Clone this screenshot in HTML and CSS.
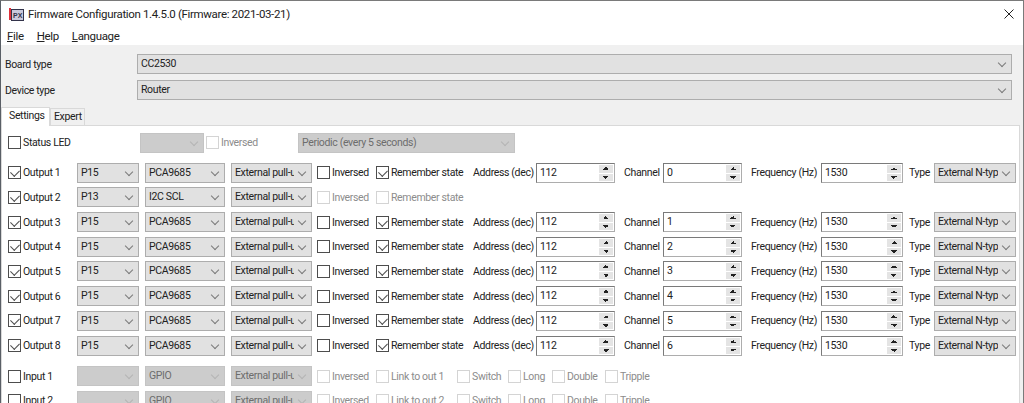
FILE: index.html
```html
<!DOCTYPE html>
<html lang="en">
<head>
  <meta charset="UTF-8">
  <title>Firmware Configuration</title>
  <link rel="stylesheet" href="styles.css">
</head>
<body>
  <div class="window">
    <div class="titlebar">
      <svg class="app-icon" width="15" height="13" viewBox="0 0 15 13">
        <rect x="2.5" y="1.5" width="12" height="11" fill="#c9c9dc" stroke="#33334a"/>
        <rect x="0" y="0" width="2" height="12" fill="#e0303a"/>
        <text x="4" y="10" class="app-icon-text">PX</text>
      </svg>
      <span class="title">Firmware Configuration 1.4.5.0 (Firmware: 2021-03-21)</span>
      <svg class="close" width="10" height="10" viewBox="0 0 10 10">
        <path d="M0.5 0.5L9.5 9.5M9.5 0.5L0.5 9.5" stroke="#222" fill="none"/>
      </svg>
    </div>
    <div class="menubar">
      <span><u>F</u>ile</span>
      <span><u>H</u>elp</span>
      <span><u>L</u>anguage</span>
    </div>

    <div class="top-fields">
      <div class="top-field">
        <label>Board type</label>
        <div class="select">CC2530</div>
      </div>
      <div class="top-field">
        <label>Device type</label>
        <div class="select">Router</div>
      </div>
    </div>

    <div class="tabs">
      <div class="tab active">Settings</div>
      <div class="tab">Expert</div>
    </div>

    <div class="panel">
      <div class="status-row">
        <div class="check-item status-label"><span class="check"></span>Status LED</div>
        <div class="select off status-pin"></div>
        <div class="check-item off status-inv"><span class="check"></span>Inversed</div>
        <div class="select off status-mode">Periodic (every 5 seconds)</div>
      </div>

      <div class="outputs">
        <div class="row">
          <div class="check-item"><span class="check on"></span>Output 1</div>
          <div class="select pin">P15</div>
          <div class="select mode">PCA9685</div>
          <div class="select pull">External pull-up</div>
          <div class="check-item"><span class="check"></span>Inversed</div>
          <div class="check-item"><span class="check on"></span>Remember state</div>
          <div class="field-label">Address (dec)</div>
          <div class="spin addr">112<span class="arrows"></span></div>
          <div class="field-label">Channel</div>
          <div class="spin addr">0<span class="arrows"></span></div>
          <div class="field-label">Frequency (Hz)</div>
          <div class="spin freq">1530<span class="arrows"></span></div>
          <div class="field-label">Type</div>
          <div class="select type">External N-type</div>
        </div>
        <div class="row">
          <div class="check-item"><span class="check on"></span>Output 2</div>
          <div class="select pin">P13</div>
          <div class="select mode">I2C SCL</div>
          <div class="select pull">External pull-up</div>
          <div class="check-item off"><span class="check"></span>Inversed</div>
          <div class="check-item off"><span class="check"></span>Remember state</div>
        </div>
        <div class="row">
          <div class="check-item"><span class="check on"></span>Output 3</div>
          <div class="select pin">P15</div>
          <div class="select mode">PCA9685</div>
          <div class="select pull">External pull-up</div>
          <div class="check-item"><span class="check"></span>Inversed</div>
          <div class="check-item"><span class="check on"></span>Remember state</div>
          <div class="field-label">Address (dec)</div>
          <div class="spin addr">112<span class="arrows"></span></div>
          <div class="field-label">Channel</div>
          <div class="spin addr">1<span class="arrows"></span></div>
          <div class="field-label">Frequency (Hz)</div>
          <div class="spin freq">1530<span class="arrows"></span></div>
          <div class="field-label">Type</div>
          <div class="select type">External N-type</div>
        </div>
        <div class="row">
          <div class="check-item"><span class="check on"></span>Output 4</div>
          <div class="select pin">P15</div>
          <div class="select mode">PCA9685</div>
          <div class="select pull">External pull-up</div>
          <div class="check-item"><span class="check"></span>Inversed</div>
          <div class="check-item"><span class="check on"></span>Remember state</div>
          <div class="field-label">Address (dec)</div>
          <div class="spin addr">112<span class="arrows"></span></div>
          <div class="field-label">Channel</div>
          <div class="spin addr">2<span class="arrows"></span></div>
          <div class="field-label">Frequency (Hz)</div>
          <div class="spin freq">1530<span class="arrows"></span></div>
          <div class="field-label">Type</div>
          <div class="select type">External N-type</div>
        </div>
        <div class="row">
          <div class="check-item"><span class="check on"></span>Output 5</div>
          <div class="select pin">P15</div>
          <div class="select mode">PCA9685</div>
          <div class="select pull">External pull-up</div>
          <div class="check-item"><span class="check"></span>Inversed</div>
          <div class="check-item"><span class="check on"></span>Remember state</div>
          <div class="field-label">Address (dec)</div>
          <div class="spin addr">112<span class="arrows"></span></div>
          <div class="field-label">Channel</div>
          <div class="spin addr">3<span class="arrows"></span></div>
          <div class="field-label">Frequency (Hz)</div>
          <div class="spin freq">1530<span class="arrows"></span></div>
          <div class="field-label">Type</div>
          <div class="select type">External N-type</div>
        </div>
        <div class="row">
          <div class="check-item"><span class="check on"></span>Output 6</div>
          <div class="select pin">P15</div>
          <div class="select mode">PCA9685</div>
          <div class="select pull">External pull-up</div>
          <div class="check-item"><span class="check"></span>Inversed</div>
          <div class="check-item"><span class="check on"></span>Remember state</div>
          <div class="field-label">Address (dec)</div>
          <div class="spin addr">112<span class="arrows"></span></div>
          <div class="field-label">Channel</div>
          <div class="spin addr">4<span class="arrows"></span></div>
          <div class="field-label">Frequency (Hz)</div>
          <div class="spin freq">1530<span class="arrows"></span></div>
          <div class="field-label">Type</div>
          <div class="select type">External N-type</div>
        </div>
        <div class="row">
          <div class="check-item"><span class="check on"></span>Output 7</div>
          <div class="select pin">P15</div>
          <div class="select mode">PCA9685</div>
          <div class="select pull">External pull-up</div>
          <div class="check-item"><span class="check"></span>Inversed</div>
          <div class="check-item"><span class="check on"></span>Remember state</div>
          <div class="field-label">Address (dec)</div>
          <div class="spin addr">112<span class="arrows"></span></div>
          <div class="field-label">Channel</div>
          <div class="spin addr">5<span class="arrows"></span></div>
          <div class="field-label">Frequency (Hz)</div>
          <div class="spin freq">1530<span class="arrows"></span></div>
          <div class="field-label">Type</div>
          <div class="select type">External N-type</div>
        </div>
        <div class="row">
          <div class="check-item"><span class="check on"></span>Output 8</div>
          <div class="select pin">P15</div>
          <div class="select mode">PCA9685</div>
          <div class="select pull">External pull-up</div>
          <div class="check-item"><span class="check"></span>Inversed</div>
          <div class="check-item"><span class="check on"></span>Remember state</div>
          <div class="field-label">Address (dec)</div>
          <div class="spin addr">112<span class="arrows"></span></div>
          <div class="field-label">Channel</div>
          <div class="spin addr">6<span class="arrows"></span></div>
          <div class="field-label">Frequency (Hz)</div>
          <div class="spin freq">1530<span class="arrows"></span></div>
          <div class="field-label">Type</div>
          <div class="select type">External N-type</div>
        </div>
      </div>

      <div class="inputs">
        <div class="row">
          <div class="check-item"><span class="check"></span>Input 1</div>
          <div class="select off pin"></div>
          <div class="select off mode">GPIO</div>
          <div class="select off pull">External pull-up</div>
          <div class="check-item off"><span class="check"></span>Inversed</div>
          <div class="input-flags">
            <div class="check-item off flag-link"><span class="check"></span>Link to out 1</div>
            <div class="check-item off flag-switch"><span class="check"></span>Switch</div>
            <div class="check-item off flag-long"><span class="check"></span>Long</div>
            <div class="check-item off flag-double"><span class="check"></span>Double</div>
            <div class="check-item off"><span class="check"></span>Tripple</div>
          </div>
        </div>
        <div class="row">
          <div class="check-item"><span class="check"></span>Input 2</div>
          <div class="select off pin"></div>
          <div class="select off mode">GPIO</div>
          <div class="select off pull">External pull-up</div>
          <div class="check-item off"><span class="check"></span>Inversed</div>
          <div class="input-flags">
            <div class="check-item off flag-link"><span class="check"></span>Link to out 2</div>
            <div class="check-item off flag-switch"><span class="check"></span>Switch</div>
            <div class="check-item off flag-long"><span class="check"></span>Long</div>
            <div class="check-item off flag-double"><span class="check"></span>Double</div>
            <div class="check-item off"><span class="check"></span>Tripple</div>
          </div>
        </div>
      </div>
    </div>
  </div>
</body>
</html>
```

FILE: styles.css
```css
* {
  box-sizing: border-box;
}

html, body {
  height: 403px;
  margin: 0;
  overflow: hidden;
}

body {
  font-family: Roboto, sans-serif;
  font-size: 10.5px;
  letter-spacing: -0.35px;
  color: #222;
}

.window {
  height: 403px;
  background-color: #f0f0f0;
  border-top: 1px solid #7a7a7a;
  border-left: 1px solid #5a5f66;
  border-right: 1px solid #7a7a7a;
  overflow: hidden;
}

.titlebar {
  display: flex;
  align-items: center;
  height: 26px;
  padding-left: 8px;
  background-color: #fff;
}

.app-icon {
  flex: none;
}

.app-icon-text {
  font-family: "Liberation Sans", sans-serif;
  font-size: 7px;
  font-weight: bold;
  letter-spacing: 0;
  fill: #33334a;
}

.title {
  margin-left: 4px;
  font-size: 11.5px;
}

.close {
  margin-left: auto;
  margin-right: 9px;
}

.menubar {
  display: flex;
  gap: 13px;
  height: 18px;
  padding-left: 6px;
  background-color: #fff;
  font-size: 11.5px;
  line-height: 18px;
}

.top-fields {
  padding: 6px 11px 0 4px;
}

.top-field {
  display: flex;
  align-items: center;
  height: 26px;
}

.top-field label {
  width: 132px;
  flex: none;
}

.top-field .select {
  flex: 1;
  height: 20px;
}

/* Tabs */
.tabs {
  display: flex;
  align-items: flex-end;
  height: 19px;
  margin-top: 3px;
}

.tab {
  width: 35px;
  height: 17px;
  padding: 0 3px;
  border: 1px solid #d9d9d9;
  border-bottom: none;
  line-height: 16px;
}

.tab.active {
  position: relative;
  top: 1px;
  width: 49px;
  height: 19px;
  padding-left: 7px;
  background-color: #fff;
}

.panel {
  height: 300px;
  margin-right: 3px;
  padding: 4px 0 0 6px;
  background-color: #fff;
  border-top: 1px solid #d9d9d9;
  border-left: 1px solid #d9d9d9;
  border-right: 1px solid #d9d9d9;
}

/* Rows */
.status-row {
  display: flex;
  align-items: center;
  height: 25px;
  margin-bottom: 5.4px;
}

.status-label {
  width: 132px;
}

.status-pin {
  width: 64px;
}

.status-inv {
  width: 92px;
  margin-left: 2px;
}

.status-mode {
  width: 217px;
}

.row {
  display: grid;
  grid-template-columns: 69px 68px 86px 86px 59px 97px 63px 88px 39px 88px 70px 88px 25px 82px;
  grid-auto-rows: 24.7px;
  align-items: center;
}

.field-label {
  white-space: nowrap;
}

.inputs {
  margin-top: 6px;
}

.input-flags {
  grid-column: 6 / -1;
  display: flex;
}

.flag-link {
  width: 81px;
}

.flag-switch {
  width: 51px;
}

.flag-long {
  width: 44px;
}

.flag-double {
  width: 53px;
}

/* Controls */
.select {
  position: relative;
  height: 20px;
  padding: 0 18px 0 3px;
  background-color: #e1e1e1;
  border: 1px solid #adadad;
  line-height: 18px;
  white-space: nowrap;
  overflow: hidden;
}

.select::before {
  content: "";
  position: absolute;
  top: 0;
  right: 0;
  bottom: 0;
  width: 17px;
  background-color: inherit;
}

.select::after {
  content: "";
  position: absolute;
  top: 5px;
  right: 6px;
  width: 5px;
  height: 5px;
  border-right: 1px solid #7a7a7a;
  border-bottom: 1px solid #7a7a7a;
  transform: rotate(45deg);
}

.select.off {
  color: #6d6d6d;
  background-color: #ccc;
  border-color: #c4c4c4;
}

.select.off::after {
  border-color: #b4b4b4;
}

.pin {
  width: 62px;
}

.mode {
  width: 80px;
}

.pull {
  width: 81px;
}

.type {
  width: 82px;
}

.check-item {
  display: flex;
  align-items: center;
  white-space: nowrap;
}

.check {
  position: relative;
  flex: none;
  width: 13px;
  height: 13px;
  margin-right: 2px;
  background-color: #fff;
  border: 1px solid #4d4d4d;
}

.check.on::after {
  content: "";
  position: absolute;
  top: 1px;
  left: 3px;
  width: 5px;
  height: 7px;
  border-right: 1px solid #4d4d4d;
  border-bottom: 1px solid #4d4d4d;
  transform: rotate(45deg);
}

.check-item.off {
  color: #8c8c8c;
}

.check-item.off .check {
  border-color: #d4d4d4;
}

.spin {
  position: relative;
  height: 20px;
  padding-left: 3px;
  background-color: #fff;
  border: 1px solid #7a7a7a;
  border-color: #7a7a7a #adadad #adadad #7a7a7a;
  line-height: 17px;
}

.arrows {
  position: absolute;
  top: 1px;
  right: 1px;
  bottom: 1px;
  width: 14px;
  background-image:
    linear-gradient(135deg, transparent 50%, #222 50%),
    linear-gradient(-135deg, transparent 50%, #222 50%),
    linear-gradient(45deg, transparent 50%, #222 50%),
    linear-gradient(-45deg, transparent 50%, #222 50%),
    linear-gradient(#e4e4e4, #e4e4e4),
    linear-gradient(#e4e4e4, #e4e4e4);
  background-size: 3px 3px, 3px 3px, 3px 3px, 3px 3px, 14px 8px, 14px 8px;
  background-repeat: no-repeat;
  background-position: 4px 2px, 7px 2px, 4px 11px, 7px 11px, 0 0, 0 9px;
}

.addr {
  width: 79px;
}

.freq {
  width: 82px;
}
```
